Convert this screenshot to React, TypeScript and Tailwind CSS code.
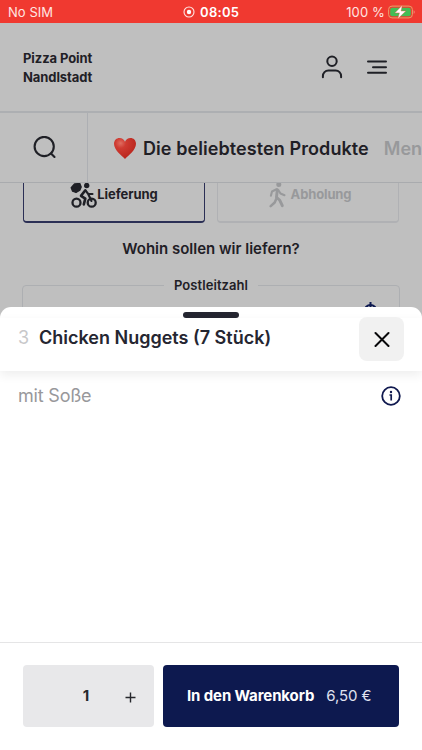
import React from 'react';

function StatusBar() {
  return (
    <div className="flex h-[23px] shrink-0 items-center bg-[#f03930] pl-2 pr-[6px] pt-px text-[13px] leading-[22px] text-[#ffe6e2]">
      <span className="w-[175px] tracking-[0.05px]">No SIM</span>
      <svg className="h-[12px] w-[12px]" viewBox="0 0 12 12" fill="none">
        <circle cx="6" cy="6" r="5" stroke="#ffe6e2" strokeWidth="1.1" />
        <circle cx="6" cy="6" r="2.2" fill="#fff" />
      </svg>
      <span className="ml-[5px] font-semibold tracking-[0.3px] text-white">08:05</span>
      <span className="ml-auto tracking-[0.150px]">100 %</span>
      <svg className="ml-[3px] mb-px h-[14px] w-[28px]" viewBox="0 0 28 14">
        <rect x="0.6" y="1.1" width="23.8" height="11.8" rx="3.4" fill="none" stroke="#e7a069" />
        <rect x="2.2" y="2.7" width="20.6" height="8.6" rx="2" fill="#43bd55" />
        <path d="M25.7 5.2v3.6c1.3-.5 1.3-3.1 0-3.6z" fill="#f48b80" />
        <path d="M14.3.3 6.8 7.900h4.600l-1.600 5.900L17.900 6h-4.800z" fill="#fff" stroke="#e8523c" strokeWidth=".4" />
      </svg>
    </div>
  );
}

function Header() {
  return (
    <header className="flex h-[90px] shrink-0 items-center border-b-2 border-[#adafb2] pl-[23px] pr-[34px]">
      <div className="pt-px text-[13px] font-bold leading-[19px] tracking-[-0.080px]">
        Pizza Point
        <br />
        Nandlstadt
      </div>
      <svg className="ml-auto h-6 w-[22px]" viewBox="0 0 22 24" fill="none" stroke="#1f2026" strokeWidth="2" strokeLinecap="round">
        <circle cx="11" cy="6.2" r="4.7" />
        <path d="M1.900 22.300v-1.200a5.500 5.500 0 0 1 5.500-5.600h7.200a5.500 5.500 0 0 1 5.500 5.600v1.200" />
      </svg>
      <svg className="ml-[23px] h-4 w-[22px]" viewBox="0 0 22 16" fill="none" stroke="#1f2026" strokeWidth="2" strokeLinecap="round">
        <path d="M2 2.600h18M7 8.300h13M2 13.800h18" />
      </svg>
    </header>
  );
}

function CategoryBar() {
  return (
    <nav className="flex h-[70px] shrink-0 items-center overflow-hidden border-b border-[#a9abae] text-[18px] font-semibold">
      <div className="flex h-full w-[88px] shrink-0 items-center border-r border-[#adafb3] pl-[33px]">
        <svg className="h-6 w-6" viewBox="0 0 24 24" fill="none" stroke="#1f2026" strokeWidth="2.100" strokeLinecap="round">
          <circle cx="11.200" cy="10.500" r="9.600" />
          <path d="m18 17.500 3.500 3.500" />
        </svg>
      </div>
      <svg className="ml-[25px] h-6 w-6 shrink-0" viewBox="0 0 24 24">
        <defs>
          <radialGradient id="heart" cx="30%" cy="25%" r="80%">
            <stop offset="0" stopColor="#df6d60" />
            <stop offset="0.3" stopColor="#cf3b32" />
            <stop offset="1" stopColor="#b7241b" />
          </radialGradient>
        </defs>
        <path d="M12 22.900C8.600 19.400 1 14.300 1 7.800 1 4 3.600 1.900 6.500 1.900c2.600 0 4.600 1.500 5.500 3.900.9-2.400 2.900-3.900 5.500-3.900 2.900 0 5.500 2.100 5.500 5.900 0 6.500-7.600 11.600-11 15.100z" fill="url(#heart)" />
      </svg>
      <span className="ml-[6px] shrink-0 whitespace-nowrap pt-[2px] tracking-[0.080px]">Die beliebtesten Produkte</span>
      <span className="ml-[15px] whitespace-nowrap pt-[2px] text-[#98999b]">Men</span>
    </nav>
  );
}

function CyclistIcon() {
  return (
    <svg className="h-[26px] w-[27px] shrink-0" viewBox="0 0 27 26" fill="none" stroke="#1f2026" strokeLinecap="round" strokeLinejoin="round">
      <path d="M4.500 1 9.800.4 11.200 3.900 9.800 7.200 6 9.500 2.600 8.200 1.200 4.800z" fill="#1f2026" strokeWidth="1.300" />
      <circle cx="16.700" cy="2.500" r="2.700" fill="#1f2026" stroke="none" />
      <circle cx="6.500" cy="19.700" r="4" strokeWidth="2.300" />
      <circle cx="21.700" cy="19.700" r="4" strokeWidth="2.300" />
      <path d="m15.300 7.400-4.300 5.400 4.300 2.900-1.500 5.700" strokeWidth="2.600" />
      <path d="m15.700 7.700 2.500 3.300h4.300M18.300 11.200l3.200 6.800" strokeWidth="2.100" />
    </svg>
  );
}

function WalkerIcon() {
  return (
    <svg className="h-[26px] w-[17px] shrink-0" viewBox="0 0 17 26" fill="none" stroke="#98999b" strokeLinecap="round" strokeLinejoin="round">
      <circle cx="9.800" cy="1.500" r="2.500" fill="#98999b" stroke="none" />
      <path d="m8.300 6.800-.8 7.400 3.300 3.100 2.500 5.400" strokeWidth="2.900" />
      <path d="M7.200 16 5.700 19.500l-4 3.700" strokeWidth="2.500" />
      <path d="M7.500 6.300 3 8.500l-1.100 4.300M9.300 7.200l2.200 3.300 4 1.700" strokeWidth="2.100" />
    </svg>
  );
}

function OrderForm() {
  return (
    <main className="flex flex-col px-[22px]">
      <div className="grid h-10 grid-cols-2 gap-3 px-px text-[13px] font-bold">
        <div className="flex items-center justify-center rounded-b-[4px] border-x-[1.500px] border-b-2 border-[#2b2f55] pb-[12px]">
          <CyclistIcon />
          <span className="-mt-[3px] tracking-[-0.060px]">Lieferung</span>
        </div>
        <div className="flex items-center justify-center gap-[5px] rounded-b-[4px] border-x border-b-2 border-[#b0b1b4] pb-[12px] pl-1 text-[#98999b]">
          <WalkerIcon />
          <span className="-mt-[3px] tracking-[-0.140px]">Abholung</span>
        </div>
      </div>
      <h2 className="mt-[16px] text-center text-[15px] font-semibold leading-5">Wohin sollen wir liefern?</h2>
      <fieldset className="mt-[16px] h-20 rounded-[4px] border border-[#adafb2] px-4">
        <legend className="mx-auto px-[10px] text-center text-[13px] font-semibold leading-5 tracking-[0.080px]">Postleitzahl</legend>
        <svg className="ml-auto mr-[5px] mt-[7px] h-5 w-[15px]" viewBox="0 0 15 20" fill="none" stroke="#0d1950" strokeWidth="2">
          <circle cx="7.500" cy="9" r="6" />
          <path d="M7.500 0v6" />
        </svg>
      </fieldset>
    </main>
  );
}

function ProductSheet() {
  return (
    <section className="absolute inset-x-0 bottom-0 flex h-[443px] flex-col rounded-t-[11px] bg-white">
      <div className="mx-auto mt-[5px] h-[6px] w-14 shrink-0 rounded-full bg-[#252631]" />
      <div className="flex h-[53px] shrink-0 items-start px-[18px] shadow-[0_4px_10px_rgba(0,0,0,0.07)]">
        <span className="mt-[8px] w-[21px] text-[18px] leading-6 text-[#c8c8ca]">3</span>
        <h1 className="mt-[8px] text-[18px] font-semibold leading-6 text-[#252631]">Chicken Nuggets (7 Stück)</h1>
        <button aria-label="Schließen" className="-mt-px ml-auto flex h-[44px] w-[45px] items-center justify-center rounded-[8px] bg-[#f1f1f1]">
          <svg className="h-4 w-4" viewBox="0 0 16 16" fill="none" stroke="#08080a" strokeWidth="2" strokeLinecap="round">
            <path d="m1.500 2 13 13m0-13-13 13" />
          </svg>
        </button>
      </div>
      <div className="mt-[13px] flex items-center justify-between pl-[18px] pr-[21px] text-[18px] leading-6 text-[#98989b]">
        <span className="tracking-[-0.200px]">mit Soße</span>
        <svg className="h-5 w-5" viewBox="0 0 20 20" fill="none" stroke="#10194f" strokeWidth="1.800">
          <circle cx="10" cy="10" r="8.800" />
          <path d="M8.500 9h1.700v5.500" strokeWidth="1.700" />
          <circle cx="10" cy="6" r="1.200" fill="#10194f" stroke="none" />
        </svg>
      </div>
      <footer className="mt-auto flex h-[108px] shrink-0 gap-[9px] border-t border-[#e5e5e6] px-[23px] pt-[22px]">
        <div className="flex h-[62px] w-[131px] items-center rounded-[4px] bg-[#e8e8ea] text-[#27282d]">
          <span className="ml-[58px] w-[10px] pt-px text-center text-[15px] font-bold">1</span>
          <svg className="ml-[34px] mt-[2px] h-[11px] w-[11px]" viewBox="0 0 11 11" stroke="#27282d" strokeWidth="1.400">
            <path d="M5.500.5v10M.5 5.500h10" />
          </svg>
        </div>
        <button className="flex h-[62px] flex-1 items-center whitespace-nowrap rounded-[4px] bg-[#0d194f] pl-[24px] pt-px text-[15px] text-white">
          <span className="font-bold tracking-[-0.120px]">In den Warenkorb</span>
          <span className="ml-3 tracking-[-0.100px] text-[#e0e2ef]">6,50 €</span>
        </button>
      </footer>
    </section>
  );
}

export default function App() {
  return (
    <div className="relative flex h-[750px] w-[422px] flex-col overflow-hidden bg-[#bfbfbf] font-[Inter,'Liberation_Sans',sans-serif] text-[#1f2026]">
      <StatusBar />
      <Header />
      <CategoryBar />
      <OrderForm />
      <ProductSheet />
    </div>
  );
}
